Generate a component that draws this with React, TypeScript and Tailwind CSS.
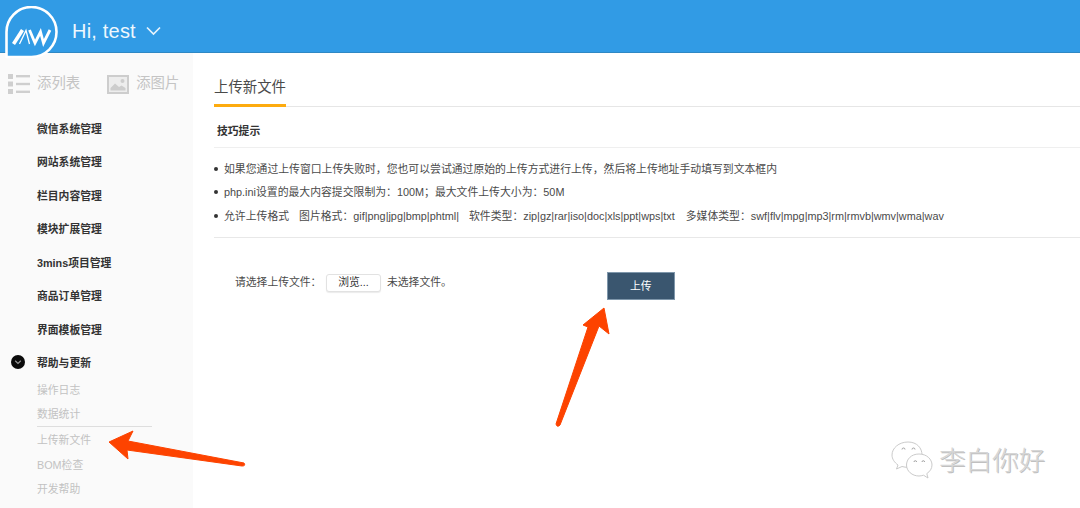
import React from "react";

const font = { fontFamily: '"Liberation Sans", "Noto Sans CJK SC", sans-serif' };

const mainItems = ["微信系统管理", "网站系统管理", "栏目内容管理", "模块扩展管理", "3mins项目管理", "商品订单管理", "界面模板管理"];

function Logo() {
  return (
    <svg className="absolute left-[4px] top-[6px]" width="56" height="54" viewBox="0 0 56 54">
      <path d="M2.5 51 V26.5 A25 25 0 1 1 27.5 51 Z" fill="#319be5" stroke="#fff" strokeWidth="2.6" strokeLinejoin="round" />
      <g fill="none" stroke="#fff" strokeLinejoin="miter">
        <path d="M9.5 38 L18.5 24" strokeWidth="3.6" />
        <path d="M15.5 38 L22 24.5 L25.5 38" strokeWidth="1.3" />
        <path d="M25.5 24 L31 37 L36.5 26 L39.5 37 L46 24" strokeWidth="2.8" />
      </g>
    </svg>
  );
}

function ListIcon() {
  return (
    <svg width="22" height="20" viewBox="0 0 22 20" fill="#cfcfcf">
      <rect x="0" y="0" width="5" height="5" />
      <rect x="0" y="7.5" width="5" height="5" />
      <rect x="0" y="15" width="5" height="5" />
      <rect x="8" y="1" width="14" height="2.4" />
      <rect x="8" y="8.8" width="14" height="2.4" />
      <rect x="8" y="16.6" width="14" height="2.4" />
    </svg>
  );
}

function ImageIcon() {
  return (
    <svg width="22" height="19" viewBox="0 0 22 19">
      <rect x="1" y="1" width="20" height="17" fill="#ededed" stroke="#cdcdcd" strokeWidth="2" />
      <circle cx="15.5" cy="6" r="2" fill="#cdcdcd" />
      <path d="M3.5 15.5 V13 L8 8.5 L12 12 L14.5 10.5 L18.5 13 V15.5 Z" fill="#cdcdcd" />
    </svg>
  );
}

function WeChat() {
  return (
    <svg width="44" height="40" viewBox="0 0 44 40" fill="#fff" stroke="#c4c4c4" strokeWidth="0.9">
      <path d="M17 1 C8 1 1 7 1 14 C1 18 3.5 21.5 7 24 L5.5 28 L11 25.5 C13 26 15 26.4 17 26.4 C26 26.4 31 20 31 14 C31 7 26 1 17 1 Z" />
      <path d="M28 13 C20 13 15.5 18.5 15.5 24 C15.5 30 21 35 28 35 C29.5 35 31 34.6 32.5 34.2 L37 37 L35.8 32.6 C39 30.5 41 27.5 41 24 C41 18.5 36 13 28 13 Z" />
      <path d="M11 8.5 a1.5 1.5 0 0 1 3 0 M21 8.5 a1.5 1.5 0 0 1 3 0 M23 21 a1.3 1.3 0 0 1 2.6 0 M31 21 a1.3 1.3 0 0 1 2.6 0" fill="none" stroke="#999" />
    </svg>
  );
}

export default function App() {
  return (
    <div className="relative flex h-[508px] w-[1080px] flex-col overflow-hidden bg-white" style={font}>
      <header className="flex h-[53px] shrink-0 items-center border-b border-[#2f88c4] bg-[#319be5] pl-[72px] pt-[9px]">
        <span className="text-[20px] leading-none tracking-[0.2px] text-[#eef7fd]">Hi, test</span>
        <svg className="ml-[10px] mt-[1px]" width="15" height="10" viewBox="0 0 15 10" fill="none" stroke="#e6f3fc" strokeWidth="1.7">
          <path d="M1 1.5 L7.5 8 L14 1.5" />
        </svg>
      </header>
      <Logo />

      <div className="flex min-h-0 flex-1">
        <aside className="w-[193px] shrink-0 bg-[#fafafa]">
          <div className="flex h-[42px] items-center pl-[8px] pt-[20px]">
            <ListIcon />
            <span className="ml-[7px] text-[14.4px] text-[#c4c4c4]">添列表</span>
            <span className="ml-[27px]"><ImageIcon /></span>
            <span className="ml-[7px] text-[14.4px] text-[#c4c4c4]">添图片</span>
          </div>
          <ul className="mt-[17px] pl-[37px] text-[10.8px] font-bold text-[#333]">
            {mainItems.map((t) => (
              <li key={t} className="flex h-[33.5px] items-center">{t}</li>
            ))}
            <li className="relative flex h-[32px] items-center pt-[2px]">
              <svg className="absolute left-[-26px] top-[8px]" width="14" height="14" viewBox="0 0 14 14">
                <circle cx="7" cy="7" r="7" fill="#0b0b0b" />
                <path d="M4.2 5.8 L7 8.4 L9.8 5.8" fill="none" stroke="#999" strokeWidth="1.2" />
              </svg>
              帮助与更新
            </li>
          </ul>
          <ul className="pl-[37px] text-[10.8px] text-[#c2c2c2]">
            <li className="flex h-[24px] items-center">操作日志</li>
            <li className="flex h-[23px] w-[115px] items-center">数据统计</li>
            <li className="flex h-[27px] w-[115px] items-center border-t border-[#dedede] pt-[2px]">上传新文件</li>
            <li className="flex h-[24.5px] items-center">BOM检查</li>
            <li className="flex h-[24.5px] items-center">开发帮助</li>
          </ul>
        </aside>

        <main className="min-w-0 flex-1 pl-[21px]">
          <div className="mt-[20px] h-[34px] border-b border-[#e6e6e6]">
            <div className="h-[34px] w-[72px] border-b-[3px] border-[#fdab0f] text-[14.4px] leading-[28px] text-[#4a4a4a]">上传新文件</div>
          </div>
          <div className="flex h-[41px] items-center border-b border-[#efefef] pl-[3px] pt-[8px] text-[10.8px] font-bold text-[#333]">技巧提示</div>
          <ul className="h-[90px] border-b border-[#e8e8e8] pt-[9px] text-[10.85px] text-[#4a4a4a]">
            <li className="flex h-[23.5px] items-center whitespace-pre"><span className="mr-[6px] h-[4px] w-[4px] rounded-full bg-[#333]" />如果您通过上传窗口上传失败时，您也可以尝试通过原始的上传方式进行上传，然后将上传地址手动填写到文本框内</li>
            <li className="flex h-[23.5px] items-center whitespace-pre"><span className="mr-[6px] h-[4px] w-[4px] rounded-full bg-[#333]" />php.ini设置的最大内容提交限制为：100M；最大文件上传大小为：50M</li>
            <li className="flex h-[23.5px] items-center whitespace-pre">
              <span className="mr-[6px] h-[4px] w-[4px] rounded-full bg-[#333]" />
              <span>允许上传格式</span>
              <span className="ml-[10px]">图片格式：gif|png|jpg|bmp|phtml|</span>
              <span className="ml-[10px]">软件类型：zip|gz|rar|iso|doc|xls|ppt|wps|txt</span>
              <span className="ml-[11px]">多媒体类型：swf|flv|mpg|mp3|rm|rmvb|wmv|wma|wav</span>
            </li>
          </ul>
          <div className="flex items-start pl-[21px] pt-[35px] text-[10.8px] text-[#4a4a4a]">
            <div className="flex h-[19px] items-center">
              <span className="w-[91px]">请选择上传文件：</span>
              <span className="flex h-[18px] w-[55px] items-center justify-center rounded-[3px] border border-[#e2e2e2] bg-white text-[#333] shadow-[0_1px_1px_rgba(0,0,0,0.08)]">浏览...</span>
              <span className="ml-[6px]">未选择文件。</span>
            </div>
            <button className="ml-[155px] mt-[-1px] h-[28px] w-[68px] border border-[#7f97ab] bg-[#3a566f] text-[10.8px] text-white">上传</button>
          </div>
        </main>
      </div>

      {/* annotation arrows */}
      <svg className="absolute left-0 top-0" width="1080" height="508" viewBox="0 0 1080 508">
        <path d="M109 442 L133 431 L128 441 L244 463 Q246 466 242 466 L127 450 L128 459 Z" fill="#fd4300" stroke="#fd4300" strokeWidth="1" strokeLinejoin="round" />
        <path d="M604 308 L609 334 L599 326 L560 425 Q557 428 556 424 L588 327 L583 325 Z" fill="#fd4300" stroke="#fd4300" strokeWidth="1" strokeLinejoin="round" />
      </svg>

      {/* watermark */}
      <div className="absolute left-[891px] top-[441px] flex items-center">
        <WeChat />
        <span className="ml-[4px] text-[26.5px] leading-none text-[#d6d6d6] [text-shadow:1px_1px_0_#c0c0c0]" style={{ fontWeight: 300 }}>李白你好</span>
      </div>
    </div>
  );
}
